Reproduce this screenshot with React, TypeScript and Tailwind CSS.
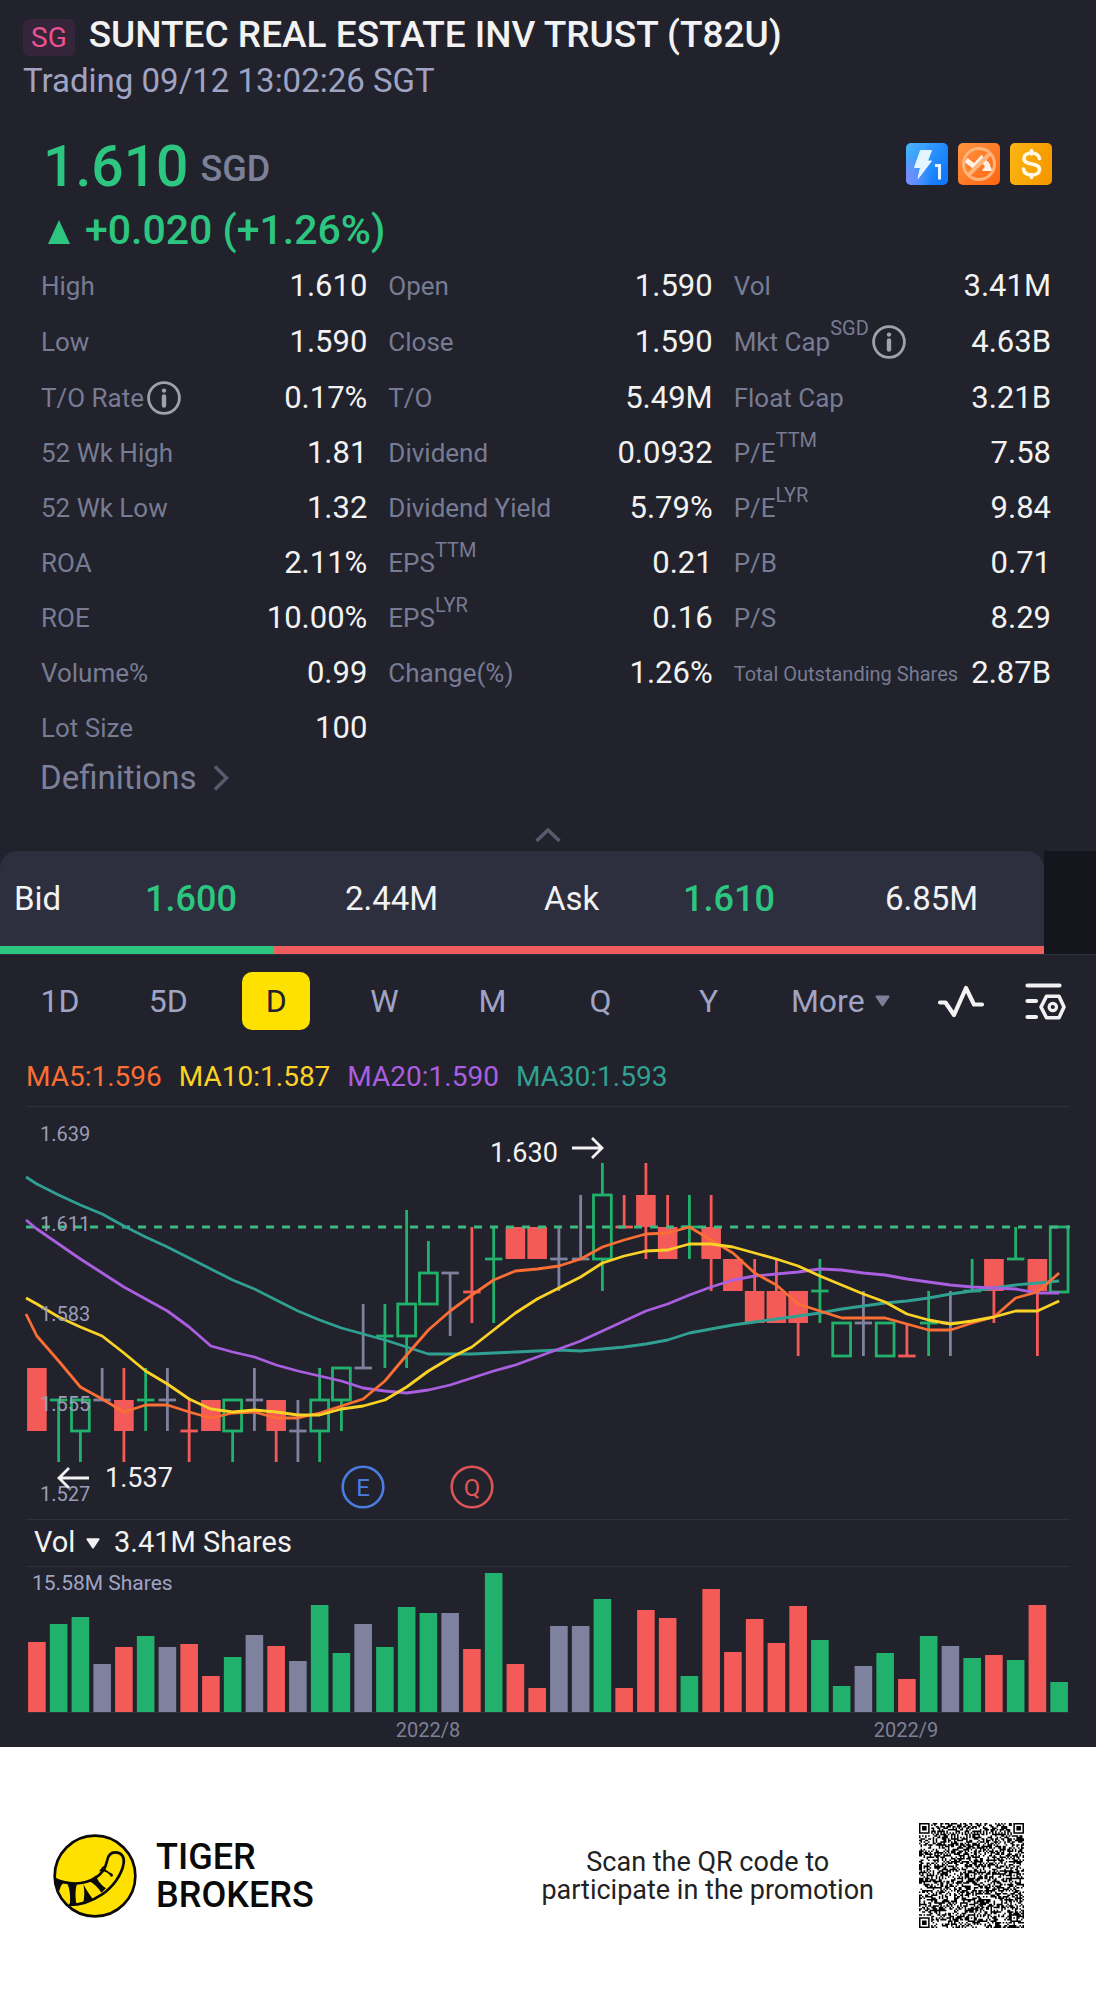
type Tone = 'up' | 'down' | 'flat'

const TONES: Record<Tone, string> = { up: '#22b16c', down: '#f45b58', flat: '#7f829e' }

interface Stat {
  label: string
  value: string
  sup?: string
  info?: boolean
  small?: boolean
}

// column by column, top to bottom
const STATS: Stat[][] = [
  [
    { label: 'High', value: '1.610' },
    { label: 'Low', value: '1.590' },
    { label: 'T/O Rate', value: '0.17%', info: true },
    { label: '52 Wk High', value: '1.81' },
    { label: '52 Wk Low', value: '1.32' },
    { label: 'ROA', value: '2.11%' },
    { label: 'ROE', value: '10.00%' },
    { label: 'Volume%', value: '0.99' },
    { label: 'Lot Size', value: '100' },
  ],
  [
    { label: 'Open', value: '1.590' },
    { label: 'Close', value: '1.590' },
    { label: 'T/O', value: '5.49M' },
    { label: 'Dividend', value: '0.0932' },
    { label: 'Dividend Yield', value: '5.79%' },
    { label: 'EPS', sup: 'TTM', value: '0.21' },
    { label: 'EPS', sup: 'LYR', value: '0.16' },
    { label: 'Change(%)', value: '1.26%' },
  ],
  [
    { label: 'Vol', value: '3.41M' },
    { label: 'Mkt Cap', sup: 'SGD', value: '4.63B', info: true },
    { label: 'Float Cap', value: '3.21B' },
    { label: 'P/E', sup: 'TTM', value: '7.58' },
    { label: 'P/E', sup: 'LYR', value: '9.84' },
    { label: 'P/B', value: '0.71' },
    { label: 'P/S', value: '8.29' },
    { label: 'Total Outstanding Shares', value: '2.87B', small: true },
  ],
]

// [tone, high, body top, body bottom, low, volume]
type Candle = [Tone, number, number, number, number, number]

const CANDLES: Candle[] = [
  ['down', 268, 268, 331, 331, 70],
  ['up', 300, 300, 300, 362, 88],
  ['up', 300, 300, 331, 362, 95],
  ['flat', 268, 300, 300, 300, 48],
  ['down', 268, 300, 331, 362, 65],
  ['up', 268, 300, 300, 331, 76],
  ['flat', 268, 300, 300, 331, 65],
  ['down', 300, 331, 331, 362, 68],
  ['down', 300, 300, 331, 331, 36],
  ['up', 300, 300, 331, 362, 55],
  ['flat', 268, 300, 300, 331, 77],
  ['down', 300, 300, 331, 362, 66],
  ['flat', 300, 331, 331, 362, 51],
  ['up', 268, 300, 331, 362, 107],
  ['up', 268, 268, 300, 331, 59],
  ['flat', 204, 268, 268, 268, 88],
  ['up', 204, 236, 236, 268, 65],
  ['up', 110, 204, 236, 268, 105],
  ['up', 141, 173, 204, 204, 99],
  ['flat', 173, 173, 173, 236, 99],
  ['down', 127, 192, 192, 223, 63],
  ['up', 127, 159, 159, 223, 139],
  ['down', 127, 127, 159, 159, 48],
  ['down', 127, 127, 159, 159, 24],
  ['flat', 127, 159, 159, 191, 86],
  ['flat', 95, 159, 159, 159, 86],
  ['up', 63, 95, 159, 191, 113],
  ['down', 95, 127, 127, 127, 24],
  ['down', 63, 95, 127, 159, 102],
  ['down', 95, 127, 159, 159, 94],
  ['up', 95, 127, 127, 159, 36],
  ['down', 95, 127, 159, 191, 123],
  ['down', 159, 159, 191, 191, 60],
  ['down', 159, 191, 223, 223, 93],
  ['down', 159, 191, 223, 223, 69],
  ['down', 191, 191, 223, 256, 106],
  ['up', 159, 191, 191, 223, 72],
  ['up', 223, 223, 256, 256, 26],
  ['flat', 191, 223, 223, 256, 46],
  ['up', 223, 223, 256, 256, 59],
  ['down', 223, 256, 256, 256, 33],
  ['up', 191, 223, 223, 256, 76],
  ['flat', 191, 223, 223, 256, 66],
  ['up', 159, 191, 191, 191, 54],
  ['down', 159, 159, 191, 223, 57],
  ['up', 127, 159, 159, 159, 52],
  ['down', 159, 159, 191, 256, 107],
  ['up', 127, 127, 192, 192, 30],
]

// the first value of each series sits on the left edge of the plot
const AVERAGES = [
  {
    name: 'MA30:1.593',
    color: '#30a092',
    ys: [77, 84, 95, 105, 114, 126, 137, 147, 158, 169, 180, 189, 200, 211, 220, 228, 234, 240, 247, 254, 254, 254, 253, 252, 251, 250, 251, 249, 247, 244, 240, 233, 229, 225, 222, 219, 216, 213, 209, 206, 203, 201, 198, 194, 191, 188, 185, 183, 181],
  },
  {
    name: 'MA20:1.590',
    color: '#a95fe0',
    ys: [120, 129, 144, 159, 173, 187, 199, 211, 227, 246, 252, 257, 265, 271, 276, 281, 288, 291, 293, 290, 285, 278, 271, 265, 257, 249, 241, 231, 221, 211, 204, 195, 187, 180, 176, 174, 172, 169, 170, 173, 175, 179, 182, 185, 187, 188, 189, 193, 193],
  },
  {
    name: 'MA5:1.596',
    color: '#fb6e34',
    ys: [214, 236, 261, 287, 299, 312, 305, 305, 312, 318, 313, 312, 318, 318, 313, 306, 299, 281, 255, 230, 211, 195, 180, 171, 169, 166, 159, 147, 140, 134, 133, 127, 140, 153, 173, 185, 204, 211, 218, 218, 218, 224, 230, 230, 223, 217, 198, 192, 173],
  },
  {
    name: 'MA10:1.587',
    color: '#fbd226',
    ys: [198, 204, 217, 227, 236, 253, 271, 284, 299, 309, 312, 310, 312, 315, 315, 309, 306, 300, 287, 271, 258, 247, 230, 213, 199, 188, 177, 163, 156, 151, 150, 144, 144, 147, 153, 159, 166, 176, 185, 194, 202, 214, 220, 224, 221, 217, 211, 211, 201],
  },
]

const PERIODS = ['1D', '5D', 'D', 'W', 'M', 'Q', 'Y']

const candleX = (i: number) => 36.9 + i * 21.75

function InfoIcon() {
  return (
    <svg viewBox="0 0 34 34" className="size-[34px]" fill="none" stroke="#a0a1ab" aria-hidden="true">
      <circle cx="17" cy="17" r="15.4" strokeWidth="2.8" />
      <path d="M17 15.5v9" strokeWidth="4.4" strokeLinecap="round" />
      <circle cx="17" cy="9.6" r="2.2" fill="#a0a1ab" stroke="none" />
    </svg>
  )
}

function Triangle({ className }: { className: string }) {
  return (
    <svg viewBox="0 0 16 12" className={className} fill="currentColor" aria-hidden="true">
      <path d="M1.5 0h13q1.4 .2 .8 1.6L9 11q-1 1.4-2 0L.7 1.6Q.1 .2 1.5 0z" />
    </svg>
  )
}

function StatRow({ stat, tall }: { stat: Stat; tall: boolean }) {
  return (
    <div className={`flex items-center justify-between ${tall ? 'h-14' : 'h-[55px]'}`}>
      <dt className="flex items-center whitespace-nowrap text-[#777b93]">
        <span className={stat.small ? 'text-[20px]' : 'text-[26px]'}>{stat.label}</span>
        {stat.sup && <sup className="top-0 mb-7 text-[20px] leading-[0px]">{stat.sup}</sup>}
        {stat.info && (
          <button type="button" aria-label={`About ${stat.label}`} className="ml-[3px]">
            <InfoIcon />
          </button>
        )}
      </dt>
      <dd className="text-[31px] text-[#f2f2f3]">{stat.value}</dd>
    </div>
  )
}

function Badges() {
  return (
    <div className="flex gap-[10px]">
      <svg viewBox="0 0 42 42" className="size-[42px]" role="img" aria-label="Level 1 quotes">
        <defs>
          <linearGradient id="quoteBlue" x1="0" y1="0" x2="1" y2="0.6">
            <stop offset="0" stopColor="#4db4fb" />
            <stop offset="1" stopColor="#1179fb" />
          </linearGradient>
          <radialGradient id="quoteViolet" cx="0" cy="0.85" r="0.6">
            <stop offset="0" stopColor="#7c8dff" />
            <stop offset="1" stopColor="#7c8dff" stopOpacity="0" />
          </radialGradient>
        </defs>
        <rect width="42" height="42" rx="5" fill="url(#quoteBlue)" />
        <rect width="42" height="42" rx="5" fill="url(#quoteViolet)" />
        <path d="M14.5 7.5h11l-4 10.5h4L12 35.5l2.5-11h-6z" fill="#e4f5ff" stroke="#e4f5ff" strokeLinejoin="round" />
        <path d="M29 22.5h4.5v14" fill="none" stroke="#e4f5ff" strokeWidth="3" />
      </svg>
      <svg viewBox="0 0 42 42" className="size-[42px]" role="img" aria-label="Short selling unavailable">
        <defs>
          <linearGradient id="shortOrange" x1="0" y1="0" x2="1" y2="1">
            <stop offset="0" stopColor="#ff9440" />
            <stop offset="1" stopColor="#ff6410" />
          </linearGradient>
        </defs>
        <rect width="42" height="42" rx="5" fill="url(#shortOrange)" />
        <path d="M8 17l8.5 6.500 7-8 7 8" fill="none" stroke="#fff1e6" strokeWidth="5" />
        <path d="M30 18l4.500 10H24z" fill="#fff1e6" />
        <circle cx="21" cy="21" r="15.5" fill="none" stroke="#ffb47c" strokeWidth="3" />
        <path d="M10.5 32L32 10.5" stroke="#ffb47c" strokeWidth="4" />
      </svg>
      <svg viewBox="0 0 42 42" className="size-[42px]" role="img" aria-label="Dividend">
        <defs>
          <linearGradient id="dividendGold" x1="0" y1="0" x2="1" y2="0.3">
            <stop offset="0" stopColor="#fbb716" />
            <stop offset="0.5" stopColor="#f8a808" />
            <stop offset="1" stopColor="#f69a00" />
          </linearGradient>
        </defs>
        <rect width="42" height="42" rx="5" fill="url(#dividendGold)" />
        <path
          d="M29.5 15.5C28.5 11.5 25.5 10 21.5 10c-4.5 0-7.5 2-7.5 5.5 0 8 15.5 3 15.5 11 0 3.5-3.5 5.5-7.5 5.5-4.5 0-8-2-8.5-6M21.5 7.5V11M21.5 31.5v3"
          fill="none"
          stroke="#fff8e4"
          strokeWidth="3.6"
          strokeLinecap="round"
        />
      </svg>
    </div>
  )
}

function Quote() {
  return (
    <header>
      <div className="px-[23px] pt-4">
        <div className="flex h-10 items-start gap-[14px]">
          <span className="self-end rounded-[6px] bg-[#35253a] px-2 text-[28px] leading-[37px] text-[#e8528f]">SG</span>
          <h1 className="text-[37px] font-medium leading-[38px] text-[#f2f2f3]">SUNTEC REAL ESTATE INV TRUST (T82U)</h1>
        </div>
        <p className="mt-1 text-[33px] leading-[42px] text-[#a0a4c4]">Trading 09/12 13:02:26 SGT</p>
      </div>

      <div className="mt-[35px] flex items-start justify-between pl-[43px] pr-11">
        <p className="flex items-center gap-3 font-medium leading-[60px]">
          <span className="text-[57px] text-[#2dc681]">1.610</span>
          <span className="pt-1 text-[36px] leading-[56px] text-[#7d8099]">SGD</span>
        </p>
        <div className="pt-[6px]">
          <Badges />
        </div>
      </div>
      <p className="mt-2 flex items-center gap-[15px] pl-12 text-[41px] font-medium leading-[50px] text-[#2dc681]">
        <svg viewBox="0 0 22 24" className="mt-1 h-6 w-[22px]" fill="currentColor" aria-hidden="true">
          <path d="M11 0l11 24H0z" />
        </svg>
        +0.020 (+1.26%)
      </p>
    </header>
  )
}

function QuoteDetails() {
  return (
    <section aria-label="Key figures">
      <div className="mt-1 grid grid-cols-[326fr_324fr_317fr] gap-x-[21px] pl-[41px] pr-[45px]">
        {STATS.map((column, i) => (
          <dl key={i}>
            {column.map((stat, row) => (
              // the rows that hold an info icon are a little taller
              <StatRow key={row} stat={stat} tall={row === 1 || row === 2} />
            ))}
          </dl>
        ))}
      </div>
      <a href="#definitions" className="flex w-fit items-center gap-4 pl-10 text-[33px] leading-[44px] text-[#7d8099]">
        Definitions
        <svg viewBox="0 0 16 26" className="h-[26px] w-4" fill="none" stroke="#595b6d" strokeWidth="3.5" aria-hidden="true">
          <path d="M2 1.5L13.5 13 2 24.5" />
        </svg>
      </a>
      <button type="button" aria-label="Collapse" className="flex h-[51px] w-full items-end justify-center pb-[9px]">
        <svg viewBox="0 0 26 14" className="h-[14px] w-[26px]" fill="none" stroke="#595b6d" strokeWidth="3.5" aria-hidden="true">
          <path d="M1.5 13L13 2l11.5 11" />
        </svg>
      </button>
    </section>
  )
}

function OrderBook() {
  return (
    <section aria-label="Bid and ask" className="flex border-b border-[#2e303e]">
      <div className="grow overflow-hidden rounded-t-[18px] bg-[#2d2f3f]">
        <div className="grid h-[95px] grid-cols-[131fr_200fr_199fr_139fr_202fr_159fr] items-center pl-[14px] text-[33px] text-[#f2f2f3]">
          <span>Bid</span>
          <span className="text-[36px] font-medium text-[#2dc681]">1.600</span>
          <span>2.44M</span>
          <span>Ask</span>
          <span className="text-[36px] font-medium text-[#2dc681]">1.610</span>
          <span>6.85M</span>
        </div>
        <div className="grid h-2 grid-cols-[244fr_685fr]">
          <div className="bg-[#2dc681]" />
          <div className="bg-[#f05c5b]" />
        </div>
      </div>
      <div className="w-[52px] bg-[#14151d]" />
    </section>
  )
}

function Toolbar() {
  return (
    <nav className="grid grid-cols-[repeat(7,108fr)_159fr_78fr_90fr] items-center px-[6px] pt-[17px] text-[32px] text-[#a0a4c4]">
      {PERIODS.map((period) => (
        <button
          key={period}
          type="button"
          aria-pressed={period === 'D'}
          className={
            period === 'D'
              ? 'h-[58px] w-[68px] justify-self-center rounded-[10px] bg-[#ffe100] text-[#21222b]'
              : 'h-[58px] justify-self-center'
          }
        >
          {period}
        </button>
      ))}
      <button type="button" aria-haspopup="menu" className="flex items-center justify-center gap-[10px] pr-1">
        More
        <Triangle className="h-3 w-[15px] text-[#7d8099]" />
      </button>
      <button type="button" aria-label="Indicators" className="justify-self-center">
        <svg viewBox="0 0 48 34" className="h-[34px] w-12" fill="none" stroke="#f2f2f3" strokeWidth="4.2" strokeLinecap="round" strokeLinejoin="round">
          <path d="M3 18.5h5.5l8.5 12.5L29 4l8 16.5h8" />
        </svg>
      </button>
      <button type="button" aria-label="Chart settings" className="justify-self-center">
        <svg viewBox="0 0 42 38" className="h-[38px] w-[42px]" fill="none" stroke="#f2f2f3" strokeWidth="4.2" strokeLinecap="round" strokeLinejoin="round">
          <path d="M3.5 3.5h32M3.5 19H12M3.5 35H12" />
          <path d="M22.5 14.2H35L40 25l-5 10.8H22.5L17 25z" strokeWidth="3.6" />
          <circle cx="28.8" cy="25" r="3.7" strokeWidth="3.2" />
        </svg>
      </button>
    </nav>
  )
}

function Legend() {
  const order = ['MA5:1.596', 'MA10:1.587', 'MA20:1.590', 'MA30:1.593']
  return (
    <div className="mb-[13px] mt-[31px] flex gap-[17px] pl-[26px] text-[28px] leading-[32px]">
      {order.map((name) => (
        <span key={name} style={{ color: AVERAGES.find((a) => a.name === name)?.color }}>
          {name}
        </span>
      ))}
    </div>
  )
}

function CandleMark({ index, candle }: { index: number; candle: Candle }) {
  const [tone, high, top, bottom, low] = candle
  const x = candleX(index)
  const doji = top === bottom
  return (
    <g stroke={TONES[tone]} strokeWidth="2.8" fill="none">
      {high < top && <path d={`M${x} ${high}V${top}`} />}
      {low > bottom && <path d={`M${x} ${bottom}V${low}`} />}
      {doji && <path d={`M${x - 8.7} ${top}h17.4`} />}
      {!doji && tone === 'down' && <rect x={x - 9.8} y={top} width="19.6" height={bottom - top} fill={TONES.down} stroke="none" />}
      {!doji && tone === 'up' && <rect x={x - 8.9} y={top} width="17.8" height={bottom - top} />}
    </g>
  )
}

function PriceChart() {
  const labels: [string, number][] = [
    ['1.639', 41],
    ['1.611', 131],
    ['1.583', 221],
    ['1.555', 311],
    ['1.527', 401],
  ]
  return (
    <svg viewBox="0 6 1096 413" className="block w-full" role="img" aria-label="Daily price chart">
      <path d="M26 6.5H1070" stroke="#2e303e" strokeWidth="1.5" />
      {CANDLES.map((candle, i) => (
        <CandleMark key={i} index={i} candle={candle} />
      ))}
      <path d="M26 127H1070" stroke="#3cba82" strokeWidth="2.8" strokeDasharray="8 8" />
      {AVERAGES.map(({ name, color, ys }) => (
        <polyline
          key={name}
          points={ys.map((y, i) => `${i === 0 ? 26 : candleX(i - 1)},${y}`).join(' ')}
          fill="none"
          stroke={color}
          strokeWidth="2.8"
          strokeLinejoin="round"
        />
      ))}
      <g fill="#9a9db6" fontSize="20">
        {labels.map(([label, y]) => (
          <text key={label} x="40" y={y}>
            {label}
          </text>
        ))}
      </g>
      <g fill="#f2f2f3" fontSize="27">
        <text x="490" y="62">1.630</text>
        <text x="105" y="387">1.537</text>
      </g>
      <g fill="none" stroke="#f2f2f3" strokeWidth="2.8">
        <path d="M572 48h29M592 38l10 10-10 10" />
        <path d="M89 378H60M69 368l-10 10 10 10" />
      </g>
      <g fontSize="24" textAnchor="middle" strokeWidth="2.6">
        <circle cx="363" cy="387" r="20.3" fill="none" stroke="#4a7de0" />
        <text x="363" y="396" fill="#4a7de0">E</text>
        <circle cx="472" cy="387" r="20.3" fill="none" stroke="#dd5557" />
        <text x="472" y="396" fill="#dd5557">Q</text>
      </g>
    </svg>
  )
}

function VolumeChart() {
  return (
    <section aria-label="Volume">
      <div className="mx-[26px] flex h-12 items-center border-y border-[#2e303e] pl-2 text-[29px] text-[#f2f2f3]">
        <select aria-label="Indicator" className="appearance-none bg-transparent">
          <option>Vol</option>
        </select>
        <Triangle className="ml-[10px] mr-[14px] h-[11px] w-[14px]" />
        <span>3.41M Shares</span>
      </div>
      <svg viewBox="0 0 1096 180" className="block w-full" role="img" aria-label="Daily volume">
        {CANDLES.map(([tone, , , , , volume], i) => (
          <rect key={i} x={candleX(i) - 8.8} y={145 - volume} width="17.6" height={volume} fill={TONES[tone]} />
        ))}
        <path d="M26 145.5H1070" stroke="#2e303e" />
        <text x="32" y="23" fontSize="21" fill="#a0a4c4">15.58M Shares</text>
        <g fontSize="20" fill="#7d8099" textAnchor="middle">
          <text x="428" y="170">2022/8</text>
          <text x="906" y="170">2022/9</text>
        </g>
      </svg>
    </section>
  )
}

function TigerLogo() {
  return (
    <svg viewBox="68 70 252 252" className="size-[84px]" role="img" aria-label="Tiger Brokers logo">
      <circle cx="194" cy="196" r="121" fill="#ffe100" stroke="#0a0a0a" strokeWidth="8" />
      <path
        d="M75 206c40 18 85 16 118-3 22-13 33-31 37-52 3-18 12-26 25-26 16 0 28 12 25 32-5 35-33 73-66 95-28 19-63 31-98 31"
        fill="none"
        stroke="#0a0a0a"
        strokeWidth="8"
      />
      <g fill="#0a0a0a">
        <path d="M73 202l30 14c-10 4-13 12-16 26l-12-14z" />
        <path d="M108 213l34 4c-7 10-8 38-4 62l-20 4c3-20 2-50-10-70z" />
        <path d="M159 220c7 14 17 31 30 47l-31 13c5-20 5-42 1-60z" />
        <path d="M174 210l24-16c1 13 14 29 29 39l-14 13c-8-14-22-28-39-36z" />
        <path d="M206 182l13-17c3 11 15 18 27 24 4 5 1 10-4 9-6-12-18-18-36-16z" />
      </g>
    </svg>
  )
}

const QR_SIZE = 69

function inFinder(x: number, y: number): boolean | null {
  const corners = [
    [0, 0],
    [QR_SIZE - 7, 0],
    [0, QR_SIZE - 7],
  ]
  for (const [cx, cy] of corners) {
    const dx = x - cx
    const dy = y - cy
    if (dx >= -1 && dx <= 7 && dy >= -1 && dy <= 7) {
      const ring = Math.max(Math.abs(dx - 3), Math.abs(dy - 3))
      return ring === 3 || ring <= 1
    }
  }
  return null
}

function qrPath() {
  let seed = 20220912
  let d = ''
  for (let y = 0; y < QR_SIZE; y++) {
    for (let x = 0; x < QR_SIZE; x++) {
      seed = (seed * 1103515245 + 12345) % 2147483648
      let dark = (seed >> 16) % 2 === 0
      if (x === 6 || y === 6) dark = (x + y) % 2 === 0
      // alignment marks every 28 modules
      const ax = Math.abs(((x - 6 + 14) % 28) - 14)
      const ay = Math.abs(((y - 6 + 14) % 28) - 14)
      if (ax <= 2 && ay <= 2 && x > 8 && y > 8) dark = Math.max(ax, ay) !== 1
      const finder = inFinder(x, y)
      if (finder !== null) dark = finder
      if (dark) d += `M${x} ${y}h1v1h-1z`
    }
  }
  return d
}

function Footer() {
  return (
    <footer className="flex h-[257px] items-center bg-white pl-[53px] pr-[72px] text-[#0a0a0a]">
      <TigerLogo />
      <p className="ml-[19px] text-[36px] font-medium leading-[38px]">
        TIGER
        <br />
        BROKERS
      </p>
      <p className="ml-auto text-center text-[27px] leading-[28px] text-[#222222]">
        Scan the QR code to
        <br />
        participate in the promotion
      </p>
      <svg viewBox={`0 0 ${QR_SIZE} ${QR_SIZE}`} className="ml-[45px] size-[105px]" role="img" aria-label="QR code">
        <path d={qrPath()} fill="#000000" />
      </svg>
    </footer>
  )
}

export default function App() {
  return (
    <main className='w-full bg-[#21222b] font-["Roboto",sans-serif]'>
      <Quote />
      <QuoteDetails />
      <OrderBook />
      <Toolbar />
      <Legend />
      <PriceChart />
      <VolumeChart />
      <Footer />
    </main>
  )
}
